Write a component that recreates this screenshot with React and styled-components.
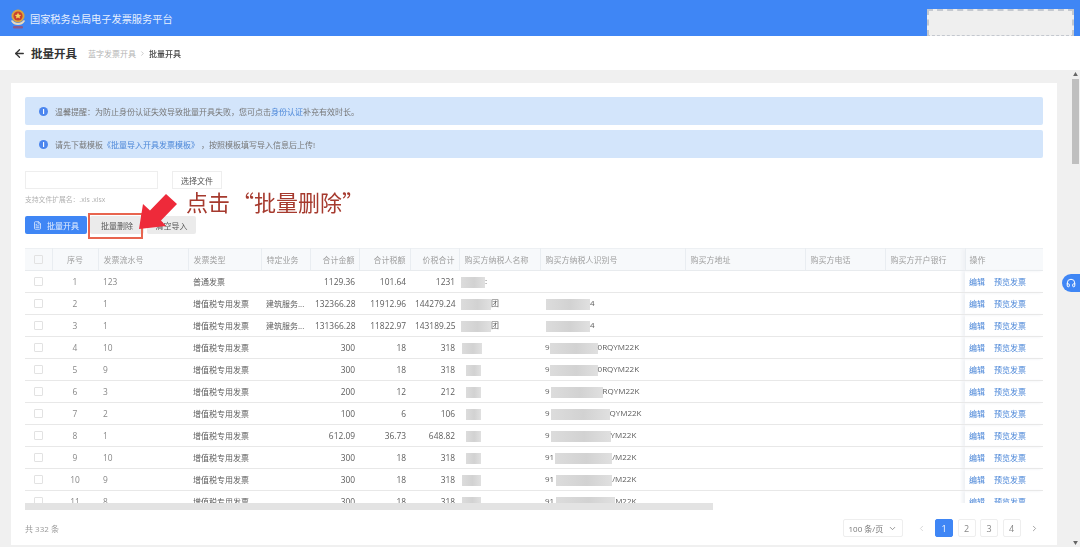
import React from 'react'
import styled, { createGlobalStyle } from 'styled-components'
import { ArrowLeft, ChevronDown, ChevronLeft, ChevronRight, FileText, Headphones } from 'lucide-react'

const GlobalStyle = createGlobalStyle`
  html, body {
    margin: 0;
    height: 547px;
    overflow: hidden;
    background: #f0f0f0;
    font-family: "Open Sans", "Noto Sans CJK SC", sans-serif;
  }
  * { box-sizing: border-box; }
`

const Page = styled.div`
  position: relative;
  width: 1080px;
  height: 547px;
  display: flex;
  flex-direction: column;
  filter: blur(0.3px);
`
const TopBar = styled.header`
  height: 36px;
  flex: none;
  background: #3f86f5;
  display: flex;
  align-items: center;
  justify-content: space-between;
  padding: 0 6px 0 10px;
`
const Brand = styled.div`
  display: flex;
  align-items: center;
  gap: 4px;
  color: #e6effd;
  font-size: 10.2px;
`
const UserBox = styled.div`
  width: 147px;
  height: 27px;
  align-self: flex-end;
  background: #efefef;
  border: 2px dashed #c4c8cf;
  border-bottom-width: 1px;
`
const SubBar = styled.div`
  height: 34px;
  flex: none;
  background: #fff;
  display: flex;
  align-items: center;
  padding-left: 13px;
  color: #333;
`
const PageTitle = styled.h1`
  margin: 0 11px 0 5px;
  font-size: 11.5px;
  font-weight: 700;
  color: #333;
`
const Crumb = styled.span`
  font-size: 8px;
  color: ${p => (p.$current ? '#444' : '#b4b4b4')};
  font-weight: ${p => (p.$current ? 500 : 400)};
`
const CrumbSep = styled(ChevronRight)`
  width: 7px;
  height: 7px;
  margin: 0 3px;
  color: #aaa;
`
const Body = styled.div`
  flex: 1;
  display: flex;
  min-height: 0;
  padding-top: 13px;
`
const Card = styled.main`
  width: 1046px;
  height: 462px;
  margin-left: 11px;
  background: #fff;
  padding: 14px 14px 0;
`
const PageScroll = styled.div`
  width: 9px;
  margin: -13px 0 0 14px;
  height: 477px;
  display: flex;
  flex-direction: column;
  align-items: center;
  justify-content: space-between;
  color: #666;
  font-size: 5px;
  line-height: 9px;
`
const Thumb = styled.div`
  width: 7px;
  height: 85px;
  background: #bfbfbf;
  margin-bottom: auto;
`
const Alert = styled.div`
  height: 28px;
  background: #d3e5fb;
  border-radius: 2px;
  display: flex;
  align-items: center;
  gap: 7px;
  padding-left: 14px;
  margin-bottom: 5px;
  font-size: 8px;
  color: #777;
`
const InfoDot = styled.span`
  width: 9px;
  height: 9px;
  border-radius: 50%;
  background: #4c86ee;
  color: #fff;
  font-size: 7px;
  line-height: 9px;
  font-weight: 700;
  text-align: center;
`
const TextLink = styled.span`
  color: #4a86d8;
`
const UploadRow = styled.div`
  display: flex;
  gap: 14px;
  margin-top: 13px;
`
const FileField = styled.div`
  width: 133px;
  height: 18px;
  border: 1px solid #eee;
`
const PlainButton = styled.button`
  width: 50px;
  height: 18px;
  padding: 0;
  border: 1px solid #eee;
  background: #fff;
  color: #555;
  font: inherit;
  font-size: 8px;
`
const Hint = styled.div`
  margin-top: 6px;
  height: 10px;
  line-height: 10px;
  font-size: 6.8px;
  color: #b0b0b0;
`
const ActionRow = styled.div`
  position: relative;
  display: flex;
  gap: 3px;
  margin-top: 11px;
`
const ActionButton = styled.button`
  height: 18px;
  width: ${p => p.$width}px;
  padding: 0;
  border: 0;
  border-radius: 2px;
  background: ${p => (p.$primary ? '#3f86f5' : '#ebebeb')};
  color: ${p => (p.$primary ? '#e8f0fe' : '#555')};
  font: inherit;
  font-size: 8px;
  display: flex;
  align-items: center;
  justify-content: center;
  gap: 5px;
`
const Highlight = styled.div`
  position: absolute;
  left: 63px;
  top: -3px;
  width: 55px;
  height: 26px;
  border: 2px solid #e8654f;
`
const Callout = styled.div`
  position: absolute;
  left: 161px;
  top: -26px;
  font-family: "Noto Sans CJK SC", sans-serif;
  font-size: 22px;
  line-height: 22px;
  color: #a63a2e;
  white-space: pre;
  word-spacing: -3px;
`
const PointerArrow = styled.svg`
  position: absolute;
  left: 110px;
  top: -25px;
`
const TableViewport = styled.div`
  margin-top: 14px;
  height: 255px;
  overflow: hidden;
`
const Table = styled.table`
  width: 1019px;
  table-layout: fixed;
  border-collapse: collapse;
  font-size: 8px;
`
const HeadCell = styled.th`
  height: 22px;
  padding: 0 ${p => (p.$align === 'right' ? 4 : 5)}px 0 5px;
  background: #f7f9fb;
  border-top: 1px solid #edf0f3;
  border-bottom: 1px solid #e8ebee;
  border-right: 1px solid #e9edf1;
  color: #a0a0a0;
  font-weight: 400;
  text-align: ${p => p.$align || 'left'};
  white-space: nowrap;
  &:last-child { box-shadow: -3px 0 3px #f0f2f5; border-right: 0; padding-left: 4px; }
`
const Cell = styled.td`
  height: 22px;
  padding: 0 ${p => (p.$align === 'right' ? 4 : 5)}px 0 5px;
  border-bottom: 1px solid #e8e8e8;
  color: ${p => (p.$muted ? '#888' : '#5c5c5c')};
  font-size: ${p => (p.$align === 'right' || p.$muted ? '8.4px' : '8px')};
  text-align: ${p => p.$align || 'left'};
  white-space: nowrap;
  overflow: hidden;
`
const ActionCell = styled(Cell)`
  overflow: visible;
  padding-left: 4px;
  box-shadow: -3px 0 3px #f0f2f5;
`
const CheckBox = styled.span`
  display: block;
  width: 9px;
  height: 9px;
  margin: 0 auto;
  border: 1px solid #e2e2e2;
  border-radius: 1px;
`
const Redact = styled.span`
  display: inline-block;
  vertical-align: middle;
  width: ${p => p.$width}px;
  height: 11px;
  margin-left: ${p => p.$gap || 0}px;
  background: linear-gradient(90deg, #dcdcdc, #d2d2d2 55%, #e0e0e0);
  box-shadow: 0 7px 3px #fff, 0 -7px 3px #fff;
`
const RowLink = styled.a`
  color: #4a86d8;
  margin-right: 9px;
`
const HScroll = styled.div`
  width: 688px;
  height: 7px;
  background: #e3e3e3;
`
const Footer = styled.div`
  display: flex;
  align-items: center;
  margin-top: 9px;
  height: 18px;
  font-size: 8px;
  color: #999;
`
const Total = styled.span`
  margin-right: auto;
`
const PageSize = styled.div`
  width: 60px;
  height: 18px;
  border: 1px solid #eee;
  border-radius: 2px;
  display: flex;
  align-items: center;
  justify-content: space-between;
  padding: 0 5px;
  color: #777;
  margin-right: 10px;
`
const Pager = styled.div`
  display: flex;
  align-items: center;
  gap: 4.5px;
  color: #bbb;
`
const PageItem = styled.span`
  width: 18px;
  height: 18px;
  border: 1px solid ${p => (p.$active ? '#3f86f5' : '#eee')};
  border-radius: 2px;
  background: ${p => (p.$active ? '#3f86f5' : '#fff')};
  color: ${p => (p.$active ? '#fff' : '#888')};
  font-size: 9px;
  display: flex;
  align-items: center;
  justify-content: center;
`
const PagerArrow = styled.span`
  width: 18px;
  display: flex;
  align-items: center;
  justify-content: center;
  color: ${p => (p.$on ? '#888' : '#ccc')};
`
const HelpButton = styled.div`
  position: absolute;
  left: 1062px;
  top: 274px;
  width: 18px;
  height: 18px;
  border-radius: 9px 0 0 9px;
  background: #3f86f5;
  color: #fff;
  display: flex;
  align-items: center;
  justify-content: center;
`

const columns = [
  { w: 27 },
  { w: 46, title: '序号', align: 'center' },
  { w: 90, title: '发票流水号' },
  { w: 73, title: '发票类型' },
  { w: 49, title: '特定业务' },
  { w: 49, title: '合计金额', align: 'right' },
  { w: 51, title: '合计税额', align: 'right' },
  { w: 49, title: '价税合计', align: 'right' },
  { w: 81, title: '购买方纳税人名称' },
  { w: 145, title: '购买方纳税人识别号' },
  { w: 120, title: '购买方地址' },
  { w: 80, title: '购买方电话' },
  { w: 80, title: '购买方开户银行' },
  { w: 79, title: '操作' },
]

const VAT = '增值税专用发票'
const BUILD = '建筑服务...'
const rows = [
  { sn: '123', type: '普通发票', amt: '1129.36', tax: '101.64', sum: '1231', name: [0, 24, ':'] },
  { sn: '1', type: VAT, biz: BUILD, amt: '132366.28', tax: '11912.96', sum: '144279.24', name: [0, 30, '团'], id: ['', 1, 44, '4'] },
  { sn: '1', type: VAT, biz: BUILD, amt: '131366.28', tax: '11822.97', sum: '143189.25', name: [0, 30, '团'], id: ['', 1, 44, '4'] },
  { sn: '10', type: VAT, amt: '300', tax: '18', sum: '318', name: [1, 20, ''], id: ['9', 0, 48, '0RQYM22K'] },
  { sn: '9', type: VAT, amt: '300', tax: '18', sum: '318', name: [5, 15, ''], id: ['9', 0, 48, '0RQYM22K'] },
  { sn: '3', type: VAT, amt: '200', tax: '12', sum: '212', name: [5, 15, ''], id: ['9', 1, 52, 'RQYM22K'] },
  { sn: '2', type: VAT, amt: '100', tax: '6', sum: '106', name: [5, 15, ''], id: ['9', 1, 59, 'QYM22K'] },
  { sn: '1', type: VAT, amt: '612.09', tax: '36.73', sum: '648.82', name: [5, 15, ''], id: ['9', 1, 60, 'YM22K'] },
  { sn: '10', type: VAT, amt: '300', tax: '18', sum: '318', name: [5, 15, ''], id: ['91', 1, 57, '/M22K'] },
  { sn: '9', type: VAT, amt: '300', tax: '18', sum: '318', name: [1, 19, ''], id: ['91', 2, 56, '/M22K'] },
  { sn: '8', type: VAT, amt: '300', tax: '18', sum: '318', name: [1, 19, ''], id: ['91', 2, 59, 'M22K'] },
]

function Emblem() {
  return (
    <svg width="16" height="24" viewBox="0 0 16 24">
      <path d="M1 15c2 3 4 4 7 4s5-1 7-4l-1-1c-2 2-4 3-6 3s-4-1-6-3z" fill="#e9dcc0" />
      <circle cx="8" cy="10" r="6.5" fill="#d9a441" />
      <circle cx="8" cy="10" r="4.6" fill="#c8402f" />
      <path d="M8 6.5l1 2.2 2.2.2-1.7 1.5.5 2.2L8 11.4l-2 1.2.5-2.2-1.7-1.5L7 8.7z" fill="#f4d35e" />
      <rect x="3" y="20" width="10" height="2.5" rx="1" fill="#8a5a8c" />
    </svg>
  )
}

function App() {
  return (
    <Page>
      <GlobalStyle />
      <TopBar>
        <Brand>
          <Emblem />
          国家税务总局电子发票服务平台
        </Brand>
        <UserBox />
      </TopBar>
      <SubBar>
        <ArrowLeft size={13} strokeWidth={2.4} />
        <PageTitle>批量开具</PageTitle>
        <Crumb>蓝字发票开具</Crumb>
        <CrumbSep />
        <Crumb $current>批量开具</Crumb>
      </SubBar>
      <Body>
        <Card>
          <Alert>
            <InfoDot>i</InfoDot>
            <span>温馨提醒：为防止身份认证失效导致批量开具失败，您可点击<TextLink>身份认证</TextLink>补充有效时长。</span>
          </Alert>
          <Alert>
            <InfoDot>i</InfoDot>
            <span>请先下载模板<TextLink>《批量导入开具发票模板》</TextLink> ，按照模板填写导入信息后上传!</span>
          </Alert>
          <UploadRow>
            <FileField />
            <PlainButton>选择文件</PlainButton>
          </UploadRow>
          <Hint>支持文件扩展名：.xls .xlsx</Hint>
          <ActionRow>
            <ActionButton $primary $width={62}>
              <FileText size={9} />
              批量开具
            </ActionButton>
            <ActionButton $width={54}>批量删除</ActionButton>
            <ActionButton $width={49}>清空导入</ActionButton>
            <Highlight />
            <PointerArrow width="44" height="42" viewBox="0 0 44 42">
              <path d="M4 38L8 13l7 6.5L31 3l11 10-16 16.5 5 5.500z" fill="#ee2a3a" />
            </PointerArrow>
            <Callout>点击 “批量删除”</Callout>
          </ActionRow>
          <TableViewport>
            <Table>
              <colgroup>
                {columns.map((c, i) => <col key={i} width={c.w} />)}
              </colgroup>
              <thead>
                <tr>
                  {columns.map((c, i) => (
                    <HeadCell key={i} $align={c.align}>
                      {i === 0 ? <CheckBox /> : c.title}
                    </HeadCell>
                  ))}
                </tr>
              </thead>
              <tbody>
                {rows.map((r, i) => (
                  <tr key={i}>
                    <Cell><CheckBox /></Cell>
                    <Cell $align="center" $muted>{i + 1}</Cell>
                    <Cell $muted>{r.sn}</Cell>
                    <Cell>{r.type}</Cell>
                    <Cell>{r.biz}</Cell>
                    <Cell $align="right">{r.amt}</Cell>
                    <Cell $align="right">{r.tax}</Cell>
                    <Cell $align="right">{r.sum}</Cell>
                    <Cell>
                      <Redact $gap={r.name[0] - 3} $width={r.name[1]} />
                      {r.name[2]}
                    </Cell>
                    <Cell>
                      {r.id && (
                        <>
                          {r.id[0]}
                          <Redact $gap={r.id[1]} $width={r.id[2]} />
                          {r.id[3]}
                        </>
                      )}
                    </Cell>
                    <Cell />
                    <Cell />
                    <Cell />
                    <ActionCell>
                      <RowLink>编辑</RowLink>
                      <RowLink>预览发票</RowLink>
                    </ActionCell>
                  </tr>
                ))}
              </tbody>
            </Table>
          </TableViewport>
          <HScroll />
          <Footer>
            <Total>共 332 条</Total>
            <PageSize>
              100 条/页
              <ChevronDown size={9} />
            </PageSize>
            <Pager>
              <PagerArrow><ChevronLeft size={9} /></PagerArrow>
              <PageItem $active>1</PageItem>
              <PageItem>2</PageItem>
              <PageItem>3</PageItem>
              <PageItem>4</PageItem>
              <PagerArrow $on><ChevronRight size={9} /></PagerArrow>
            </Pager>
          </Footer>
        </Card>
        <PageScroll>
          <span>▲</span>
          <Thumb />
          <span>▼</span>
        </PageScroll>
      </Body>
      <HelpButton><Headphones size={10} strokeWidth={2.4} /></HelpButton>
    </Page>
  )
}

export default App
